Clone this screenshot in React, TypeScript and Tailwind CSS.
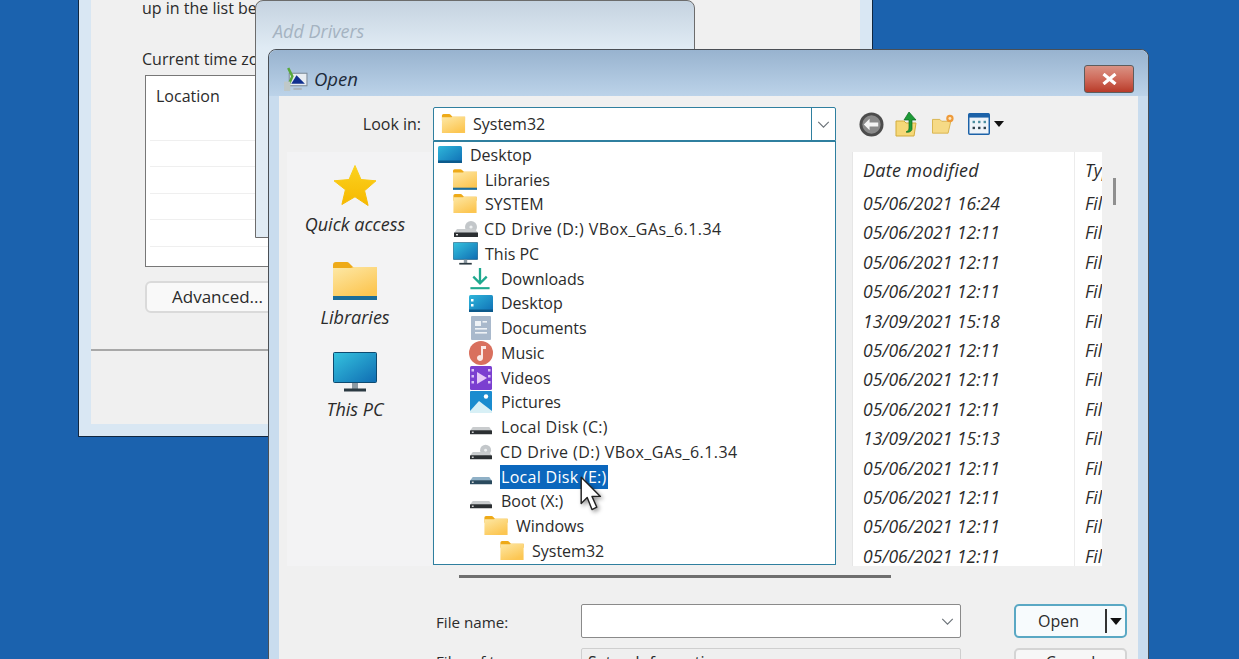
import React, { useId } from 'react';

const font = 'font-["Open_Sans","Noto_Sans",sans-serif]';

const FolderIcon: React.FC<{ className?: string; line?: boolean }> = ({ className, line }) => {
  const id = useId();
  return (
    <svg viewBox="0 0 44 38" className={className}>
      <defs>
        <linearGradient id={id} x1="0" y1="0" x2="0.6" y2="1">
          <stop offset="0" stopColor="#fde8a6" />
          <stop offset="1" stopColor="#fcc652" />
        </linearGradient>
      </defs>
      <path d="M0 3a3 3 0 0 1 3-3h11a3 3 0 0 1 2 1l4 4h24v8H0z" fill="#eeaa18" />
      <path d="M0 6h18l3-1h23v31H0z" fill={`url(#${id})`} />
      {line && <rect x="0" y="34" width="44" height="4" fill="#1c6d99" />}
    </svg>
  );
};

const MonitorIcon: React.FC<{ className?: string }> = ({ className }) => {
  const id = useId();
  return (
    <svg viewBox="0 0 44 40" className={className}>
      <defs>
        <linearGradient id={id} x1="0" y1="0" x2="1" y2="1">
          <stop offset="0" stopColor="#35c3df" />
          <stop offset="1" stopColor="#0f6cb2" />
        </linearGradient>
      </defs>
      <rect x="0.5" y="0.5" width="43" height="30" rx="1" fill={`url(#${id})`} stroke="#0d4a70" />
      <rect x="19" y="31" width="6" height="6" fill="#8d9aa3" />
      <rect x="11" y="36.5" width="22" height="3" fill="#2c3a42" />
    </svg>
  );
};

const DesktopIcon: React.FC<{ className?: string; dots?: boolean }> = ({ className, dots }) => {
  const id = useId();
  return (
    <svg viewBox="0 0 24 17" className={className}>
      <defs>
        <linearGradient id={id} x1="0" y1="0" x2="1" y2="1">
          <stop offset="0" stopColor="#2fb6da" />
          <stop offset="1" stopColor="#0f6fb5" />
        </linearGradient>
      </defs>
      <rect width="24" height="17" rx="1.5" fill={`url(#${id})`} />
      <rect y="14.5" width="24" height="2.5" fill="#0c5a8c" />
      {dots && <rect x="2" y="4" width="2.5" height="2.5" fill="#fff" />}
      {dots && <rect x="2" y="9" width="2.5" height="2.5" fill="#fff" />}
    </svg>
  );
};

const DocsIcon: React.FC<{ className?: string }> = ({ className }) => (
  <svg viewBox="0 0 20 24" className={className}>
    <rect width="20" height="24" rx="1" fill="#a9b9cc" />
    <rect x="4" y="5" width="6" height="5" fill="#eef2f6" />
    <rect x="4" y="12" width="12" height="1.6" fill="#eef2f6" />
    <rect x="4" y="16" width="12" height="1.6" fill="#eef2f6" />
    <rect x="11.5" y="5" width="4.5" height="1.6" fill="#eef2f6" />
  </svg>
);

const MusicIcon: React.FC<{ className?: string }> = ({ className }) => (
  <svg viewBox="0 0 24 24" className={className}>
    <circle cx="12" cy="12" r="12" fill="#d9705e" />
    <path d="M12 5h5v3h-3v9a3 3 0 1 1-2-2.8z" fill="#fbe9e6" />
  </svg>
);

const VideosIcon: React.FC<{ className?: string }> = ({ className }) => (
  <svg viewBox="0 0 22 24" className={className}>
    <rect width="22" height="24" rx="1.5" fill="#7b3fd0" />
    <path d="M7 6l10 6-10 6z" fill="#e6c9f7" />
    <rect x="1.5" y="3" width="2.5" height="2.5" fill="#d9c2f5" />
    <rect x="1.5" y="9" width="2.5" height="2.5" fill="#d9c2f5" />
    <rect x="1.5" y="15" width="2.5" height="2.5" fill="#d9c2f5" />
    <rect x="18" y="3" width="2.5" height="2.5" fill="#d9c2f5" />
    <rect x="18" y="9" width="2.5" height="2.5" fill="#d9c2f5" />
    <rect x="18" y="15" width="2.5" height="2.5" fill="#d9c2f5" />
  </svg>
);

const PicturesIcon: React.FC<{ className?: string }> = ({ className }) => (
  <svg viewBox="0 0 22 22" className={className}>
    <rect width="22" height="22" rx="1" fill="#1a8ccf" />
    <circle cx="16" cy="5.5" r="2.2" fill="#fff" />
    <path d="M0 20l9-10 13 10v2H0z" fill="#d8f0f6" />
  </svg>
);

const DownloadIcon: React.FC<{ className?: string }> = ({ className }) => (
  <svg viewBox="0 0 22 24" className={className}>
    <path d="M11 1v15M4 10l7 7 7-7" fill="none" stroke="#1fa98f" strokeWidth="2.4" />
    <rect x="1" y="21" width="20" height="2.2" fill="#1fa98f" />
  </svg>
);

const DriveIcon: React.FC<{ className?: string; blue?: boolean; disc?: boolean }> = ({ className, blue, disc }) => (
  <svg viewBox="0 0 24 16" className={className}>
    {disc && <circle cx="17" cy="6" r="6" fill="#c3c7ca" />}
    {disc && <circle cx="17" cy="6" r="1.6" fill="#eef0f1" />}
    <path d="M3 8h18l3 4H0z" fill={blue ? '#8fb0c6' : '#c9ccce'} />
    <rect y="11.5" width="24" height="4.5" rx="0.5" fill={blue ? '#2a4a5e' : '#2b2f32'} />
    <rect x="2" y="13" width="2" height="1.4" fill="#e6e6e6" />
  </svg>
);

const Chevron: React.FC<{ className?: string }> = ({ className }) => (
  <svg viewBox="0 0 14 8" className={className}>
    <path d="M1 1l6 6 6-6" fill="none" stroke="#6b7278" strokeWidth="1.3" />
  </svg>
);

const treeRows = [
  { label: 'Desktop', left: 5, text: 36, icon: <DesktopIcon className="h-[17px] w-6" /> },
  { label: 'Libraries', left: 20, text: 51, icon: <FolderIcon line className="h-[21px] w-6" /> },
  { label: 'SYSTEM', left: 20, text: 51, icon: <FolderIcon className="h-[20px] w-6" /> },
  { label: 'CD Drive (D:) VBox_GAs_6.1.34', left: 21, text: 50, spacing: 'tracking-[0.44px]', icon: <DriveIcon disc className="h-4 w-6" /> },
  { label: 'This PC', left: 20, text: 51, icon: <MonitorIcon className="h-[23px] w-[25px]" /> },
  { label: 'Downloads', left: 36, text: 67, icon: <DownloadIcon className="h-[23px] w-[22px]" /> },
  { label: 'Desktop', left: 36, text: 67, icon: <DesktopIcon dots className="h-[17px] w-6" /> },
  { label: 'Documents', left: 38, text: 67, icon: <DocsIcon className="h-6 w-5" /> },
  { label: 'Music', left: 36, text: 67, icon: <MusicIcon className="h-6 w-6" /> },
  { label: 'Videos', left: 37, text: 67, icon: <VideosIcon className="h-6 w-[22px]" /> },
  { label: 'Pictures', left: 37, text: 67, icon: <PicturesIcon className="h-[22px] w-[22px]" /> },
  { label: 'Local Disk (C:)', left: 37, text: 67, spacing: 'tracking-[0.3px]', icon: <DriveIcon className="h-4 w-[22px]" /> },
  { label: 'CD Drive (D:) VBox_GAs_6.1.34', left: 37, text: 66, spacing: 'tracking-[0.44px]', icon: <DriveIcon disc className="h-4 w-[22px]" /> },
  { label: 'Local Disk (E:)', left: 37, text: 67, selected: true, spacing: 'tracking-[0.3px]', icon: <DriveIcon blue className="h-4 w-[22px]" /> },
  { label: 'Boot (X:)', left: 37, text: 67, icon: <DriveIcon className="h-4 w-[22px]" /> },
  { label: 'Windows', left: 51, text: 82, icon: <FolderIcon className="h-[20px] w-6" /> },
  { label: 'System32', left: 67, text: 98, icon: <FolderIcon className="h-[20px] w-6" /> },
];

const dates = [
  '05/06/2021 16:24',
  '05/06/2021 12:11',
  '05/06/2021 12:11',
  '05/06/2021 12:11',
  '13/09/2021 15:18',
  '05/06/2021 12:11',
  '05/06/2021 12:11',
  '05/06/2021 12:11',
  '13/09/2021 15:13',
  '05/06/2021 12:11',
  '05/06/2021 12:11',
  '05/06/2021 12:11',
  '05/06/2021 12:11',
];

const App: React.FC = () => {
  return (
    <div className={`relative h-[659px] w-[1239px] overflow-hidden bg-[#1b62ae] ${font} text-[16px] text-[#2b2b2b]`}>
      {/* Back window: time zone page */}
      <div className="absolute left-[78px] top-[-20px] h-[457px] w-[795px] border border-[#10263f] bg-[#d9e7f3] p-3">
        <div className="flex h-full flex-col bg-[#f0f0f0]">
          <div className="flex-1 pl-[51px] pt-[5px]">
            <p className="h-5 leading-5">up in the list below.</p>
            <p className="mt-[31px] h-5 leading-5">Current time zone:</p>
            <div className="ml-[3px] mt-[6px] h-[192px] w-[640px] border border-[#777] bg-white">
              <div className="h-[64px] pl-[10px] pt-[10px] leading-5">Location</div>
              {[0, 1, 2, 3].map((i) => (
                <div key={i} className="mx-1 h-[26.4px] border-t border-[#efefef]" />
              ))}
              <div className="mx-1 border-t border-[#efefef]" />
            </div>
            <button className="ml-[3px] mt-[14px] h-[32px] w-[150px] rounded-[6px] border-2 border-[#dadada] bg-[#f9f9f9] pl-[25px] text-left text-[17px]">
              Advanced...
            </button>
          </div>
          <div className="h-[75px] border-t-2 border-[#a8a8a8]" />
        </div>
      </div>

      {/* Middle window: Add Drivers */}
      <div className="absolute left-[255px] top-0 h-[238px] w-[440px] rounded-t-lg border border-[#6c6c6c] bg-gradient-to-b from-[#c5d3e0] to-[#e0ebf4] to-20%">
        <p className="pl-[17px] pt-[18px] text-[18px] italic leading-6 text-[#a5b3c1]">Add Drivers</p>
      </div>

      {/* Front window: Open */}
      <div className="absolute left-[268px] top-[49px] h-[660px] w-[881px] rounded-t-lg border border-[#4a4f55] bg-[#c9dcee]">
        <div className="flex h-[46px] items-center justify-between rounded-t-lg bg-gradient-to-b from-[#98b3cf] to-[#bcd3e9] pl-[14px] pr-[14px] pt-[12px]">
          <div className="flex items-center gap-[6px]">
            <svg viewBox="0 0 24 24" className="h-[25px] w-[25px]">
              <rect x="6" y="6" width="17" height="12" fill="#e8edf2" stroke="#7d8b98" />
              <path d="M8 16l5-8 8 8z" fill="#10308f" />
              <path d="M5 1l4 8-4 9" fill="none" stroke="#58a83c" strokeWidth="2.4" />
              <rect x="1" y="14" width="6" height="9" fill="#bfc8c8" />
              <rect x="10" y="20" width="8" height="2" fill="#aab4bc" />
            </svg>
            <span className="text-[18.500px] italic text-[#1d2a3a]">Open</span>
          </div>
          <div className="flex h-[28px] w-[50px] items-center justify-center rounded-[3px] border border-[#5d5d5d] bg-gradient-to-b from-[#d99284] via-[#cf6a5a] to-[#b83a28]">
            <svg viewBox="0 0 16 12" className="h-[12px] w-[17px]">
              <path d="M2 1l12 10M14 1L2 11" stroke="#fff" strokeWidth="3.2" />
            </svg>
          </div>
        </div>

        <div className="relative mx-[10px] h-[620px] bg-[#f0f0f0] pt-[11px]">
          {/* Look in row */}
          <div className="flex h-[34px] items-center">
            <span className="w-[142px] text-right">Look in:</span>
            <div className="ml-3 flex h-[34px] w-[403px] items-center rounded-t-[2px] border border-[#2f7f9f] bg-white">
              <FolderIcon className="ml-[7px] h-[20px] w-[25px]" />
              <span className="ml-[7px] flex-1">System32</span>
              <div className="flex h-full w-6 items-center justify-center border-l border-[#2f7f9f]">
                <Chevron className="h-[7px] w-[13px]" />
              </div>
            </div>
            {/* Toolbar */}
            <div className="ml-[23px] flex items-center">
              <svg viewBox="0 0 26 26" className="h-[25px] w-[25px]">
                <circle cx="13" cy="13" r="12.5" fill="#4c4c4c" />
                <circle cx="13" cy="13" r="9.5" fill="#8a8a8a" />
                <path d="M5 13l6-6v4h9v4h-9v4z" fill="#f3f3f3" />
              </svg>
              <svg viewBox="0 0 24 26" className="ml-[11px] h-[26px] w-[24px]">
                <path d="M1 10h8l2 2h10l-2 13H1z" fill="#f6d878" stroke="#d2ac3c" />
                <path d="M14 1l7 8h-4v9c0 2-3 4-6 3 2-1 3-2 3-4V9H9z" fill="#1d9a37" stroke="#0c6a21" strokeWidth="0.7" />
              </svg>
              <svg viewBox="0 0 26 24" className="ml-[12px] h-[22px] w-[25px]">
                <path d="M1 7h8l2 2h10l-3 13H1z" fill="#f6da86" stroke="#d8b24a" />
                <circle cx="20" cy="6" r="4" fill="#ee9a3a" />
                <circle cx="20" cy="6" r="1.6" fill="#fde6c0" />
              </svg>
              <svg viewBox="0 0 24 24" className="ml-[11px] h-[22px] w-[24px]">
                <rect x="0.8" y="0.8" width="22.4" height="22.4" rx="1" fill="#eef3f8" stroke="#1c62a8" strokeWidth="1.6" />
                <rect x="1" y="1" width="22" height="4" fill="#1c62a8" />
                {[5, 11, 17].map((x) => (
                  <React.Fragment key={x}>
                    <rect x={x} y="8.5" width="2.6" height="2.6" fill="#4a8d9e" />
                    <rect x={x} y="15" width="2.6" height="2.6" fill="#2d3f4a" />
                  </React.Fragment>
                ))}
              </svg>
              <svg viewBox="0 0 10 6" className="ml-[3px] h-[6px] w-[10px]">
                <path d="M0 0h10L5 6z" fill="#111" />
              </svg>
            </div>
          </div>

          {/* Sidebar + file list */}
          <div className="mt-[11px] flex h-[414px]">
            <div className="ml-2 flex w-[145px] flex-col items-center bg-[#f3f3f4] pr-[9px] pt-[12px] text-[18px] italic">
              <svg viewBox="0 0 44 42" className="h-[43px] w-[44px]">
                <defs>
                  <linearGradient id="star" x1="0" y1="0" x2="0" y2="1">
                    <stop offset="0" stopColor="#fbd21f" />
                    <stop offset="1" stopColor="#f6b800" />
                  </linearGradient>
                </defs>
                <path d="M22 1l6 14 15 1.3-11.400 9.900 3.500 14.800L22 32.300 8.900 40l3.500-14.800L1 16.300 16 15z" fill="url(#star)" stroke="url(#star)" strokeLinejoin="round" />
              </svg>
              <span className="mt-[5px] h-6 leading-6">Quick access</span>
              <FolderIcon line className="mt-[26px] h-[38px] w-11" />
              <span className="mt-[5px] h-6 leading-6">Libraries</span>
              <MonitorIcon className="mt-[23px] h-[40px] w-11" />
              <span className="mt-[5px] h-6 leading-6">This PC</span>
            </div>
            <div className="relative ml-[420px] h-full w-[250px] overflow-hidden border-l border-[#e6e6e6] bg-white text-[17.500px] italic">
              {/* Column divider */}
              <div className="absolute bottom-0 left-[221px] top-0 w-px bg-[#ececec]" />
              <div className="flex h-[36.500px] items-end pb-[5px] pl-[10px]">
                <span className="w-[211px] shrink-0 text-[18px] tracking-[0.3px]">Date modified</span>
                <span className="whitespace-nowrap pl-[11px]">Type</span>
              </div>
              <div className="h-[377px] overflow-hidden">
                {dates.map((d, i) => (
                  <div key={i} className="flex h-[29.4px] items-center pl-[10px]">
                    <span className="w-[211px] shrink-0">{d}</span>
                    <span className="whitespace-nowrap pl-[11px]">File</span>
                  </div>
                ))}
              </div>
            </div>
            <div className="ml-[11px] mt-[26px] h-[27px] w-[3px] bg-[#8f8f8f]" />
          </div>

          {/* Horizontal scrollbar */}
          <div className="ml-[180px] mt-[9px] h-[3px] w-[432px] bg-[#6f6f6f]" />

          {/* File name / type rows */}
          <div className="ml-[157px] mt-[26px] flex h-[34px] items-center">
            <span className="w-[145px] pt-[2px] text-[15.200px]">File name:</span>
            <div className="flex h-[34px] w-[380px] items-center justify-end rounded-[2px] border border-[#8a8a8a] bg-white pr-[6px]">
              <Chevron className="h-[7px] w-[13px]" />
            </div>
            <div className="ml-[53px] flex h-[34px] w-[113px] items-center rounded-[5px] border-2 border-[#5aa8c4] bg-[#f7fbfd]">
              <span className="w-[89px] pr-[4px] text-center">Open</span>
              <div className="h-[24px] w-[2px] bg-[#333]" />
              <svg viewBox="0 0 10 6" className="ml-[2px] h-[7px] w-[14px]">
                <path d="M0 0h10L5 6z" fill="#111" />
              </svg>
            </div>
          </div>
          <div className="ml-[157px] mt-[10px] flex h-[34px] items-start">
            <span className="mt-[2px] w-[145px] text-[15.200px]">Files of type:</span>
            <div className="flex h-[34px] w-[380px] items-start rounded-[2px] border border-[#cfcfcf] bg-[#efefef] pl-[6px] pt-px">
              Setup Information
            </div>
            <div className="ml-[53px] flex h-[34px] w-[113px] items-start justify-center rounded-[5px] border-2 border-[#d4d4d4] bg-[#f7f7f7]">
              Cancel
            </div>
          </div>

          {/* Look in dropdown list */}
          <div className="absolute left-[154px] top-[45px] h-[424px] w-[403px] border border-[#2f7f9f] bg-white pt-[0.500px]">
            {treeRows.map((row) => (
              <div key={row.label + row.text} className="relative flex h-[24.75px] items-center" style={{ paddingLeft: row.text - 1 }}>
                <span className="absolute flex h-full items-center" style={{ left: row.left - 1 }}>
                  {row.icon}
                </span>
                <span className={`${row.spacing ?? ''} ${row.selected ? 'bg-[#0b67bd] px-px leading-[24px] text-white' : 'px-px'}`}>
                  {row.label}
                </span>
              </div>
            ))}
          </div>
        </div>
      </div>

      {/* Mouse cursor */}
      <svg viewBox="0 0 20 30" className="absolute left-[580px] top-[476px] h-[36px] w-[24px] drop-shadow-[2px_2px_2px_rgba(0,0,0,0.4)]">
        <path d="M1 1v22l5-5 4 10 4-2-4-9h7z" fill="#fff" stroke="#222" strokeWidth="1.2" strokeLinejoin="round" />
      </svg>
    </div>
  );
};

export default App;
